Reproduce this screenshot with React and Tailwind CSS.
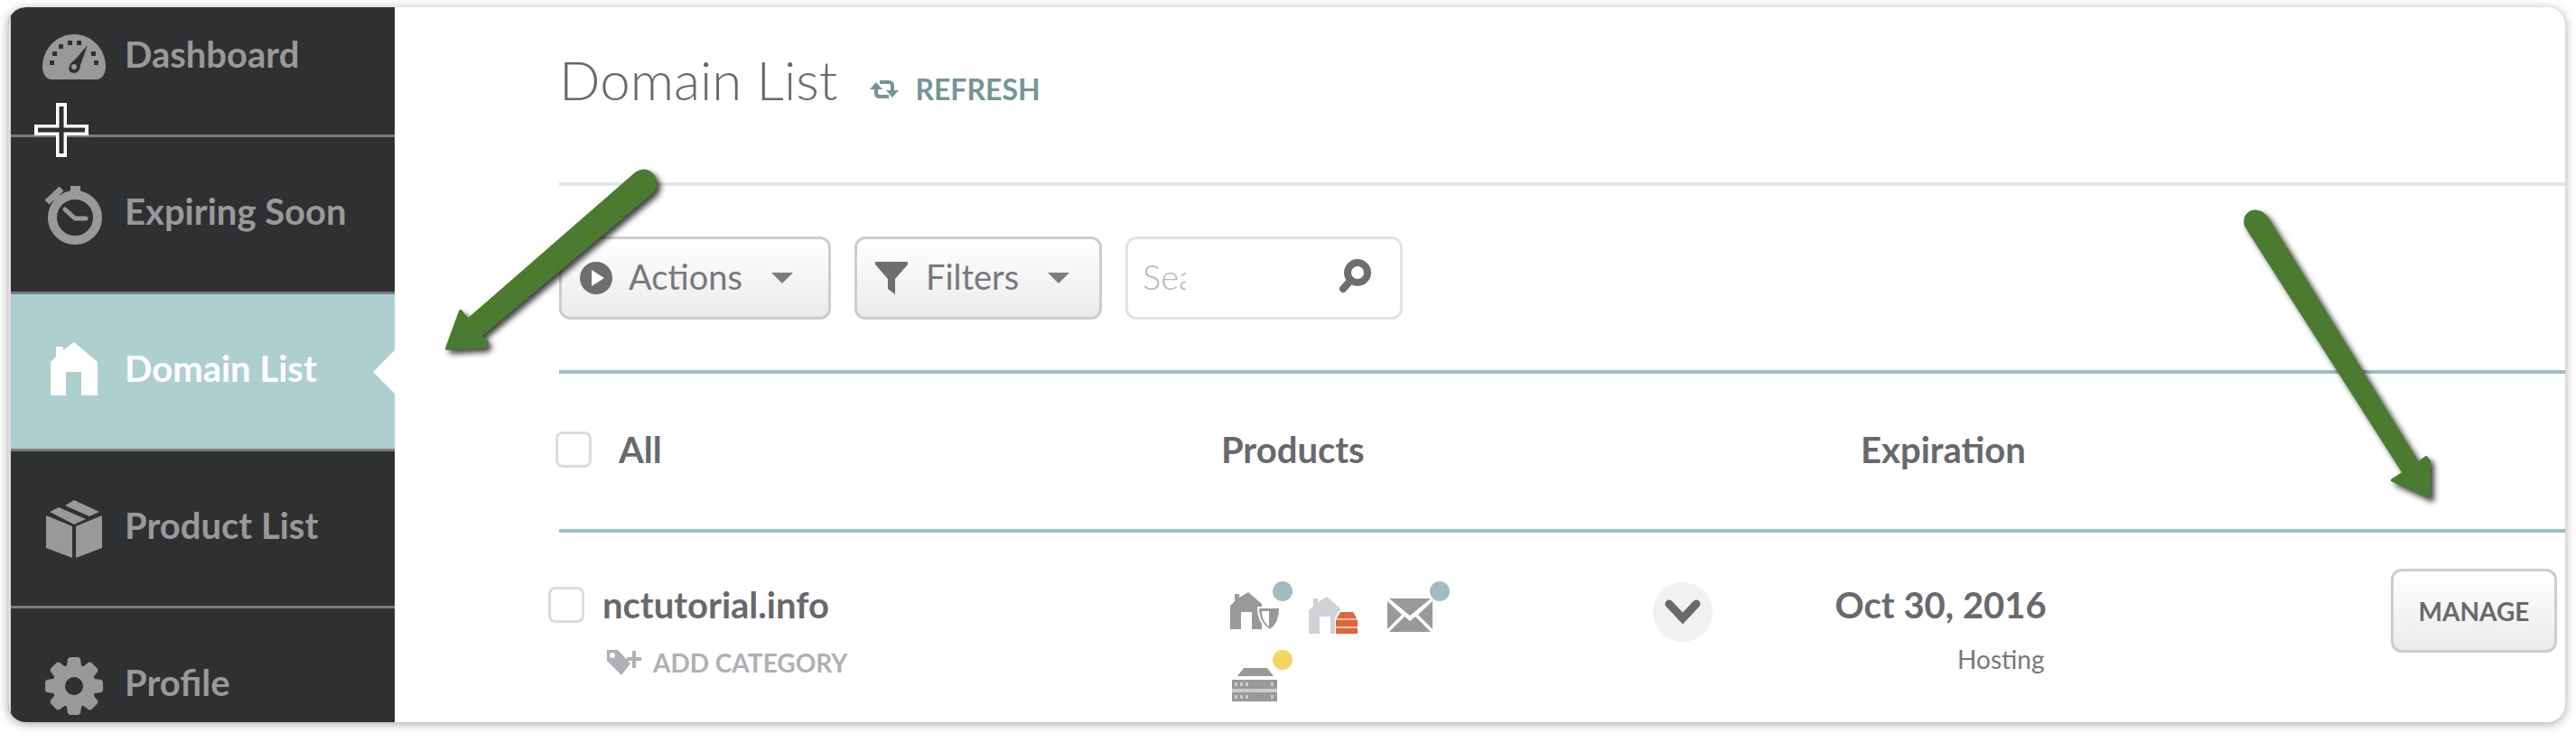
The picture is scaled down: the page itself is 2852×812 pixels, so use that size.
import { useState } from 'react';

const gear = Array.from({ length: 8 }, (_, i) => i * 45);

function DashboardIcon() {
    return (
        <svg viewBox="0 0 72 72" className="size-[72px]" fill="currentColor" aria-hidden="true">
            <path d="M1 46C1 26 17 10 36 10s35 16 35 36c0 7-4 14-10 14H11C5 60 1 53 1 46z" />
            <g fill="#2f3032">
                <rect x="9" y="39" width="5" height="5" />
                <rect x="12" y="29" width="5" height="5" />
                <rect x="19" y="21" width="5" height="5" />
                <rect x="29" y="17" width="5" height="5" />
                <rect x="39" y="17" width="5" height="5" />
                <rect x="55" y="29" width="5" height="5" />
                <rect x="58" y="39" width="5" height="5" />
                <path d="M51 22 43 44c0 5-3 9-7 9-5 0-7-4-5-8 1-4 4-5 6-7z" />
            </g>
            <circle cx="36" cy="46" r="3" />
        </svg>
    );
}

function StopwatchIcon() {
    return (
        <svg viewBox="0 0 72 72" className="size-[72px]" aria-hidden="true">
            <g fill="none" stroke="currentColor">
                <circle cx="37" cy="39" r="25" strokeWidth="10" />
                <path d="M26 30l11 10h12" strokeWidth="5" strokeLinecap="round" strokeLinejoin="round" />
                <path d="M6 22 22 7" strokeWidth="7" />
                <path d="M14 14l9 9" strokeWidth="8" />
            </g>
            <rect x="32" y="4" width="11" height="12" fill="currentColor" />
        </svg>
    );
}

function HouseIcon() {
    return (
        <svg viewBox="0 0 72 72" className="size-[72px]" fill="currentColor" aria-hidden="true">
            <path d="M27 62H10V25l6-6V8h8v4l12-9 26 22v37H44V36H27z" />
        </svg>
    );
}

function BoxIcon() {
    return (
        <svg viewBox="0 0 72 72" className="size-[72px]" fill="currentColor" aria-hidden="true">
            <path d="M5 21l29 12v35L5 57zM67 21 38 33v35l29-11z" />
            <path d="M9 17l10-5 30 13-13 6zM26 10l10-6 28 13-11 5z" />
        </svg>
    );
}

function GearIcon() {
    return (
        <svg viewBox="0 0 72 72" className="size-[72px]" fill="currentColor" aria-hidden="true">
            {gear.map(deg => (
                <path key={deg} d="M27 20l2-14q1-2 3-2h8q2 0 3 2l2 14z" transform={`rotate(${deg} 36 36)`} />
            ))}
            <circle cx="36" cy="36" r="17" fill="none" stroke="currentColor" strokeWidth="14" />
        </svg>
    );
}

function RefreshIcon() {
    return (
        <svg viewBox="0 0 32 24" className="h-6 w-8" aria-hidden="true">
            <path d="M11 4h10q4 0 4 4v6M21 20H11q-4 0-4-4v-6" fill="none" stroke="currentColor" strokeWidth="4" />
            <path d="M18 13h14l-7 8zM0 12h14L7 4z" fill="currentColor" />
        </svg>
    );
}

function PlayIcon() {
    return (
        <svg viewBox="0 0 36 36" className="size-9" aria-hidden="true">
            <circle cx="18" cy="18" r="18" fill="#6d6e70" />
            <path d="M13 9v18l14-9z" fill="#fff" />
        </svg>
    );
}

function FunnelIcon() {
    return (
        <svg viewBox="0 0 36 36" className="size-9" aria-hidden="true">
            <path d="M0 0h36v3L22 19v17l-8-6V19L0 3z" fill="#6d6e70" />
        </svg>
    );
}

function Caret() {
    return (
        <svg viewBox="0 0 24 12" className="h-3 w-6" aria-hidden="true">
            <path d="M0 0h24L12 12z" fill="#7b7c7e" />
        </svg>
    );
}

function SearchIcon() {
    return (
        <svg viewBox="0 0 36 40" className="h-10 w-9" fill="none" stroke="#6d6e70" aria-hidden="true">
            <circle cx="21" cy="16" r="11" strokeWidth="8" />
            <path d="M13 25l-8 9" strokeWidth="8" strokeLinecap="round" />
        </svg>
    );
}

function TagIcon() {
    return (
        <svg viewBox="0 0 40 30" className="h-[30px] w-10" aria-hidden="true">
            <path d="M1 1h12l14 15-10 13L1 13z" fill="currentColor" />
            <circle cx="7" cy="7" r="3" fill="#fff" />
            <path d="M23 11h16M31 2v19" stroke="currentColor" strokeWidth="4" />
        </svg>
    );
}

const housePath = 'M1 53V27l5-5V14h5v4l10-6 15 13v28H25V34H13v19z';

function HouseShield() {
    return (
        <svg viewBox="0 0 60 60" className="size-[60px]" aria-hidden="true">
            <path d={housePath} fill="#999" />
            <path d="M32 29h24c0 12-3 20-11 25-8-5-13-13-13-25z" fill="#999" stroke="#fff" strokeWidth="2" />
            <path d="M36 33h8v17c-5-4-8-9-8-17z" fill="#fff" />
        </svg>
    );
}

function HouseServer() {
    return (
        <svg viewBox="0 0 60 60" className="size-[60px]" aria-hidden="true">
            <path d={housePath} fill="#d0d2d5" transform="translate(0 5)" />
            <path d="M30 60V40l4-7h17l5 7v20z" fill="#fff" />
            <path d="M36 34h14l4 7H32zM31 43h24v7H31zM31 52h24v6H31z" fill="#dd6638" />
            <path d="M31 42h24M31 51h24" stroke="#f3c3ae" strokeWidth="2" />
        </svg>
    );
}

function Envelope() {
    return (
        <svg viewBox="0 0 60 60" className="size-[60px]" fill="#999" aria-hidden="true">
            <path d="M3 19h46L26 38zM1 22l16 15L1 53zM51 22 35 37l16 16zM20 39l6 5 6-5 17 17H3z" />
        </svg>
    );
}

function Server() {
    return (
        <svg viewBox="0 0 60 60" className="size-[60px]" aria-hidden="true">
            <path d="M16 20h26l7 9H9z" fill="#999" />
            <path d="M3 33h50v24H3z" fill="#ccc" />
            <path d="M3 33h50v10H3zM3 47h50v10H3z" fill="#999" />
            <path d="M6 38h3M12 38h3M18 38h3M46 38h3M6 52h3M12 52h3M18 52h3M46 52h3" stroke="#ccc" strokeWidth="4" />
        </svg>
    );
}

const navItems = [
    { label: 'Dashboard', Icon: DashboardIcon },
    { label: 'Expiring Soon', Icon: StopwatchIcon },
    { label: 'Domain List', Icon: HouseIcon },
    { label: 'Product List', Icon: BoxIcon },
    { label: 'Profile', Icon: GearIcon },
];

const products = [
    { name: 'Domain privacy', Icon: HouseShield, dot: 'bg-[#9fbdbf]' },
    { name: 'Domain hosting', Icon: HouseServer, dot: null },
    { name: 'Email', Icon: Envelope, dot: 'bg-[#9fbdbf]' },
    { name: 'Server', Icon: Server, dot: 'bg-[#f3d55f]' },
];

const buttonStyle = 'flex items-center rounded-xl border-[3px] border-[#cdcdcd] bg-linear-to-b from-white to-[#ebebeb]';
const checkboxStyle = 'size-10 shrink-0 appearance-none rounded-lg border-[3px] border-[#dcdcdc] bg-white checked:bg-[#9fbdbf]';
const headCell = 'h-[180px] border-y-4 border-[#9dbfc1] p-0 pb-1 text-left font-bold';

function Sidebar({ active, onSelect }) {
    return (
        <nav className="w-[428px] shrink-0 border-l-[3px] border-[#dcdcdc] bg-[#2f3032]">
            <ul className="-mt-[30px]">
                {navItems.map(({ label, Icon }) => {
                    const isActive = label === active;
                    return (
                        <li key={label} className={`relative border-b-[3px] border-[#7b7b7b] ${isActive ? 'bg-[#adcfd0] text-white' : 'text-[#999]'}`}>
                            <a href="#" onClick={() => onSelect(label)} className="flex h-[171px] items-center gap-5 pl-[34px]">
                                <Icon />
                                <span className="pb-2 font-bold">{label}</span>
                            </a>
                            {isActive && (
                                <svg viewBox="0 0 24 48" className="absolute top-1/2 right-0 h-12 w-6 -translate-y-1/2" aria-hidden="true">
                                    <path d="M24 0v48L0 24z" fill="#fff" />
                                </svg>
                            )}
                        </li>
                    );
                })}
            </ul>
        </nav>
    );
}

function Toolbar() {
    return (
        <div className="mt-14 flex h-[92px] gap-[26px] text-[38px] text-[#77787b]">
            <button type="button" className={`${buttonStyle} w-[301px] pl-5`}>
                <PlayIcon />
                <span className="mr-8 ml-[18px] pb-1">Actions</span>
                <Caret />
            </button>
            <button type="button" className={`${buttonStyle} w-[274px] pl-5`}>
                <FunnelIcon />
                <span className="mr-8 ml-5 pb-1">Filters</span>
                <Caret />
            </button>
            <div className="flex w-[307px] items-center justify-between rounded-xl border-[3px] border-[#e3e3e3] pr-8 pb-1 pl-4">
                <input type="text" aria-label="Search" placeholder="Search" className="w-[48px] font-light outline-none placeholder:text-[#b5b6b8]" />
                <button type="button" aria-label="Search">
                    <SearchIcon />
                </button>
            </div>
        </div>
    );
}

function DomainTable() {
    return (
        <table className="mt-14 w-full table-fixed border-separate border-spacing-0 text-[#68696c]">
            <colgroup>
                <col className="w-[33%]" />
                <col className="w-[18%]" />
                <col className="w-[10%]" />
                <col className="w-[16%]" />
                <col className="w-[23%]" />
            </colgroup>
            <thead>
                <tr>
                    <th className={headCell}>
                        <label className="-ml-1 flex items-center gap-[30px]">
                            <input type="checkbox" className={checkboxStyle} />
                            All
                        </label>
                    </th>
                    <th className={headCell}>Products</th>
                    <th className={headCell} aria-label="Details"></th>
                    <th className={headCell}>
                        <div className="text-center">Expiration</div>
                    </th>
                    <th className={headCell} aria-label="Manage"></th>
                </tr>
            </thead>
            <tbody>
                <tr className="align-top">
                    <td className="p-0 pt-[60px]">
                        <label className="-ml-3 flex items-center gap-5 leading-10 font-bold">
                            <input type="checkbox" className={checkboxStyle} />
                            nctutorial.info
                        </label>
                        <a href="#" className="mt-6 ml-[52px] flex items-center gap-3 text-[28px] leading-10 font-bold text-[#aeb0b3]">
                            <TagIcon />
                            ADD CATEGORY
                        </a>
                    </td>
                    <td className="p-0 pt-[54px]">
                        <ul className="ml-[9px] flex w-[264px] flex-wrap">
                            {products.map(({ name, Icon, dot }) => (
                                <li key={name} className="relative h-[76px] w-[87px]" aria-label={name}>
                                    <Icon />
                                    {dot && <span className={`absolute top-0 left-12 size-[22px] rounded-full ${dot}`} />}
                                </li>
                            ))}
                        </ul>
                    </td>
                    <td className="p-0 pt-[55px]">
                        <button type="button" aria-label="Show details" className="mx-auto flex size-[66px] items-center justify-center rounded-full bg-[#f1f1f1]">
                            <svg viewBox="0 0 40 28" className="h-7 w-10" aria-hidden="true">
                                <path d="M5 5l15 16L35 5" fill="none" stroke="#68696c" strokeWidth="9" strokeLinecap="round" />
                            </svg>
                        </button>
                    </td>
                    <td className="p-0 pt-[60px] pr-2">
                        <div className="mx-auto w-[232px] text-right leading-10 whitespace-nowrap">
                            <p className="font-bold">Oct 30, 2016</p>
                            <p className="mt-5 text-[28px] text-[#77787b]">Hosting</p>
                        </div>
                    </td>
                    <td className="p-0 pt-10 pr-[9px]">
                        <button type="button" className={`${buttonStyle} ml-auto h-[93px] w-[184px] justify-center text-[28px] font-bold`}>MANAGE</button>
                    </td>
                </tr>
            </tbody>
        </table>
    );
}

// Callout arrows and crosshair drawn over the page
function Arrow({ d, className, viewBox }) {
    return (
        <svg viewBox={viewBox} className={`pointer-events-none absolute overflow-visible drop-shadow-[4px_4px_3px_rgba(0,0,0,0.75)] ${className}`} aria-hidden="true">
            <path d={d} fill="#4a7b30" stroke="#4a7b30" strokeWidth="4" strokeLinejoin="round" />
        </svg>
    );
}

export default function App() {
    const [active, setActive] = useState('Domain List');

    return (
        <div className="flex h-screen bg-white pt-2 pr-3 pb-3 pl-[9px] font-['Lato',sans-serif] text-[40px]">
            <div className="relative flex min-w-0 flex-1 overflow-hidden rounded-[20px] bg-white shadow-[0_2px_12px_rgba(0,0,0,0.35)]">
                <Sidebar active={active} onSelect={setActive} />

                <main className="min-w-0 flex-1 pl-[182px]">
                    <header className="flex h-[198px] items-baseline gap-9 border-b-4 border-[#e6e6e6] pt-12">
                        <h1 className="text-[60px] leading-[64px] font-light text-[#68696c]">Domain List</h1>
                        <button type="button" className="flex items-center gap-[18px] text-[32px] font-bold text-[#759596]">
                            <RefreshIcon />
                            REFRESH
                        </button>
                    </header>
                    <Toolbar />
                    <DomainTable />
                </main>

                <Arrow
                    viewBox="0 0 240 204"
                    className="top-[178px] left-[482px] h-[204px] w-[240px]"
                    d="M4 200 19 159 27 169 214 6Q224 0 232 9 238 19 230 27L40 186 48 194 45 198z"
                />
                <Arrow
                    viewBox="0 0 210 322"
                    className="top-[223px] right-[146px] h-[322px] w-[210px]"
                    d="M205 319 165 301 178 293 3 19Q0 8 9 4 18 2 25 10L193 283 202 276 205 280z"
                />
                <svg viewBox="0 0 62 62" className="pointer-events-none absolute top-[105px] left-[28px] size-[62px]" aria-hidden="true">
                    <path d="M25 1h12v24h24v12H37v24H25V37H1V25h24z" fill="#fff" />
                    <path d="M31 5v52M5 31h52" stroke="#2f3032" strokeWidth="5" />
                </svg>
            </div>
        </div>
    );
}
